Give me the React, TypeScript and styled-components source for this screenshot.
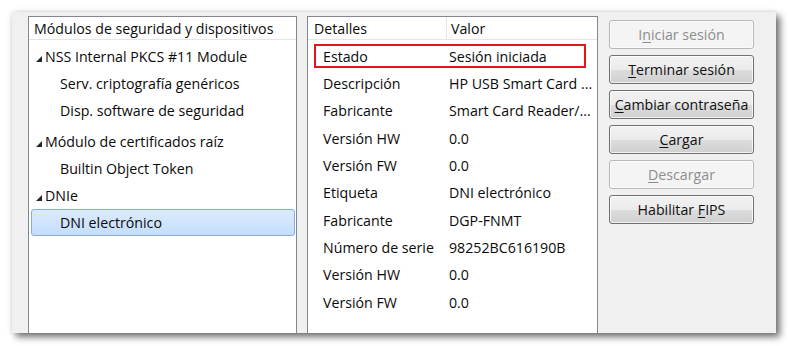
import React from "react";
import styled, { createGlobalStyle } from "styled-components";

const Global = createGlobalStyle`
  html, body { margin: 0; padding: 0; background: #ffffff; }
  body { font-family: "Open Sans", "Noto Sans", Arial, sans-serif; }
  * { box-sizing: border-box; }
`;

const Page = styled.div`
  width: 789px;
  height: 346px;
  padding: 12px 0 0 12px;
  overflow: hidden;
`;

const Frame = styled.div`
  width: 764px;
  height: 321px;
  background: #f0f0f0;
  box-shadow: 4px 4px 7px rgba(0, 0, 0, 0.55), 0 0 5px rgba(0, 0, 0, 0.12);
  display: flex;
  align-items: stretch;
  padding: 4px 0 0 16px;
  overflow: hidden;
  font-size: 14.2px;
  color: #0a0a0a;
`;

const Panel = styled.div<{ $w: number }>`
  width: ${(p) => p.$w}px;
  flex: none;
  background: #ffffff;
  border: 1px solid #828790;
  border-bottom: none;
  display: flex;
  flex-direction: column;
`;

const Gap = styled.div<{ $w: number }>`
  width: ${(p) => p.$w}px;
  flex: none;
`;

const HeaderRow = styled.div`
  height: 23px;
  display: flex;
  align-items: center;
  border-bottom: 1px solid #e5e5e5;
  white-space: nowrap;
`;

const HeaderCell = styled.div<{ $w?: number; $pad: number; $sep?: boolean }>`
  height: 100%;
  display: flex;
  align-items: center;
  padding-left: ${(p) => p.$pad}px;
  ${(p) => (p.$w ? `width: ${p.$w}px; flex: none;` : "flex: 1;")}
  ${(p) => (p.$sep ? "border-right: 1px solid #e5e5e5;" : "")}
  padding-top: 1px;
`;

const TreeList = styled.div`
  padding-top: 3px;
  display: flex;
  flex-direction: column;
`;

const TreeRow = styled.div<{ $level: number; $selected?: boolean; $mt?: number }>`
  height: 27px;
  display: flex;
  align-items: center;
  margin: ${(p) => p.$mt ?? 0}px 1px 0 2px;
  padding-left: ${(p) => (p.$level === 0 ? 4 : 28)}px;
  border: 1px solid ${(p) => (p.$selected ? "#84acdd" : "transparent")};
  border-radius: 3px;
  background: ${(p) =>
    p.$selected ? "linear-gradient(to bottom, #dcebfc 0%, #c4ddfc 100%)" : "transparent"};
  white-space: nowrap;
`;

const Expander = styled.svg`
  width: 6px;
  height: 6px;
  margin: 5px 3px 0 0;
  flex: none;
`;

const DetailList = styled.div`
  padding-top: 2.5px;
  display: flex;
  flex-direction: column;
`;

const DetailRow = styled.div`
  height: 27.33px;
  display: flex;
  align-items: center;
  position: relative;
  white-space: nowrap;
`;

const Label = styled.div`
  width: 141px;
  flex: none;
  padding-left: 15px;
`;

const Value = styled.div`
  flex: 1;
  overflow: hidden;
`;

const Highlight = styled.div`
  position: absolute;
  left: 6px;
  top: 1.5px;
  width: 272px;
  height: 24px;
  border: 2px solid #e8141c;
  pointer-events: none;
`;

const ButtonColumn = styled.div`
  width: 145px;
  flex: none;
  padding-top: 4px;
  display: flex;
  flex-direction: column;
  gap: 6px;
`;

const Button = styled.div<{ $disabled?: boolean }>`
  height: 29px;
  display: flex;
  align-items: center;
  justify-content: center;
  border-radius: 3px;
  white-space: nowrap;
  border: 1px solid ${(p) => (p.$disabled ? "#b5b9bd" : "#707070")};
  color: ${(p) => (p.$disabled ? "#8d8d8d" : "#111111")};
  background: ${(p) =>
    p.$disabled
      ? "#f4f4f4"
      : "linear-gradient(to bottom, #f2f2f2 0%, #ebebeb 50%, #dddddd 51%, #cfcfcf 100%)"};
  box-shadow: inset 0 0 0 1px ${(p) => (p.$disabled ? "#fbfbfb" : "rgba(255,255,255,0.75)")};
  padding-bottom: 1px;
`;

const Caption = styled.span`
  white-space: pre;
`;

const Key = styled.span`
  text-decoration: underline;
  text-underline-offset: 2px;
`;

const Triangle = () => (
  <Expander viewBox="0 0 6 6">
    <polygon points="6,0 6,6 0,6" fill="#262626" />
  </Expander>
);

type Node = { label: string; level: number; selected?: boolean; mt?: number };

const tree: Node[] = [
  { label: "NSS Internal PKCS #11 Module", level: 0 },
  { label: "Serv. criptografía genéricos", level: 1 },
  { label: "Disp. software de seguridad", level: 1 },
  { label: "Módulo de certificados raíz", level: 0, mt: 4 },
  { label: "Builtin Object Token", level: 1 },
  { label: "DNIe", level: 0 },
  { label: "DNI electrónico", level: 1, selected: true },
];

const details: [string, string][] = [
  ["Estado", "Sesión iniciada"],
  ["Descripción", "HP USB Smart Card ..."],
  ["Fabricante", "Smart Card Reader/..."],
  ["Versión HW", "0.0"],
  ["Versión FW", "0.0"],
  ["Etiqueta", "DNI electrónico"],
  ["Fabricante", "DGP-FNMT"],
  ["Número de serie", "98252BC616190B"],
  ["Versión HW", "0.0"],
  ["Versión FW", "0.0"],
];

export default function App() {
  return (
    <>
      <Global />
      <Page>
        <Frame>
          <Panel $w={269}>
            <HeaderRow>
              <HeaderCell $pad={5}>Módulos de seguridad y dispositivos</HeaderCell>
            </HeaderRow>
            <TreeList>
              {tree.map((n, i) => (
                <TreeRow key={i} $level={n.level} $selected={n.selected} $mt={n.mt}>
                  {n.level === 0 && <Triangle />}
                  {n.label}
                </TreeRow>
              ))}
            </TreeList>
          </Panel>
          <Gap $w={10} />
          <Panel $w={291}>
            <HeaderRow>
              <HeaderCell $w={139} $pad={6} $sep>
                Detalles
              </HeaderCell>
              <HeaderCell $pad={4}>Valor</HeaderCell>
            </HeaderRow>
            <DetailList>
              {details.map(([k, v], i) => (
                <DetailRow key={i}>
                  <Label>{k}</Label>
                  <Value>{v}</Value>
                  {i === 0 && <Highlight />}
                </DetailRow>
              ))}
            </DetailList>
          </Panel>
          <Gap $w={11} />
          <ButtonColumn>
            <Button $disabled>
              <Caption>
                I<Key>n</Key>iciar sesión
              </Caption>
            </Button>
            <Button>
              <Caption>
                <Key>T</Key>erminar sesión
              </Caption>
            </Button>
            <Button>
              <Caption>
                <Key>C</Key>ambiar contraseña
              </Caption>
            </Button>
            <Button>
              <Caption>
                <Key>C</Key>argar
              </Caption>
            </Button>
            <Button $disabled>
              <Caption>
                <Key>D</Key>escargar
              </Caption>
            </Button>
            <Button>
              <Caption>
                Habilitar <Key>F</Key>IPS
              </Caption>
            </Button>
          </ButtonColumn>
        </Frame>
      </Page>
    </>
  );
}
